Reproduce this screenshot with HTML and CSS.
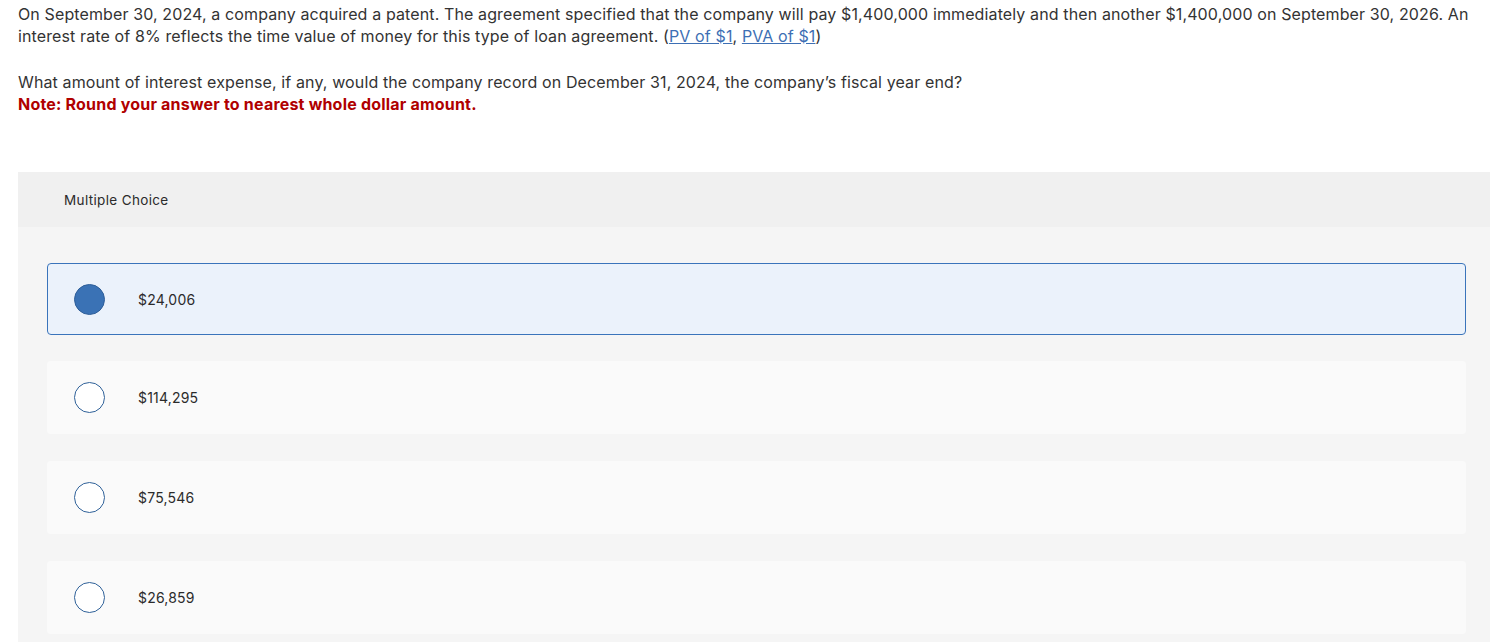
FILE: index.html
```html
<!DOCTYPE html>
<html>
<head>
<meta charset="utf-8">
<link rel="stylesheet" href="styles.css">
</head>
<body>
<div class="page">
  <div class="question">
    <p class="para">On September 30, 2024, a company acquired a patent. The agreement specified that the company will pay $1,400,000 immediately and then another $1,400,000 on September 30, 2026. An interest rate of 8% reflects the time value of money for this type of loan agreement. (<a href="#" class="link">PV of $1</a>, <a href="#" class="link">PVA of $1</a>)</p>
    <p class="para">What amount of interest expense, if any, would the company record on December 31, 2024, the company’s fiscal year end?<br><strong class="note">Note: Round your answer to nearest whole dollar amount.</strong></p>
  </div>
  <div class="panel">
    <div class="panel-head">Multiple Choice</div>
    <div class="panel-body">
      <div class="option selected"><span class="radio filled"></span><span class="label">$24,006</span></div>
      <div class="option"><span class="radio"></span><span class="label">$114,295</span></div>
      <div class="option"><span class="radio"></span><span class="label">$75,546</span></div>
      <div class="option"><span class="radio"></span><span class="label">$26,859</span></div>
    </div>
  </div>
</div>
</body>
</html>
```
FILE: styles.css
```css
html, body {
  margin: 0;
  padding: 0;
  background: #ffffff;
}
body {
  font-family: Inter, "Open Sans", "Liberation Sans", sans-serif;
  color: #333333;
  overflow: hidden;
}
.page {
  padding: 3px 0 0 18px;
}
.question {
  padding-right: 6px;
}
.para {
  margin: 0 0 24px 0;
  font-size: 16px;
  line-height: 22px;
  letter-spacing: 0.12px;
}
.para:last-child {
  margin-bottom: 0;
}
.link {
  color: #3d6fb4;
  text-decoration: underline;
}
.note {
  color: #b00000;
  font-weight: 700;
  letter-spacing: 0.2px;
}
.panel {
  margin-top: 57px;
  background: #f5f5f5;
}
.panel-head {
  background: #f0f0f0;
  height: 55px;
  display: flex;
  align-items: center;
  padding-left: 46px;
  font-size: 13.5px;
  letter-spacing: 0.35px;
  color: #2b2b2b;
}
.panel-body {
  padding: 36px 24px 0 29px;
  display: flex;
  flex-direction: column;
}
.option {
  box-sizing: border-box;
  height: 73px;
  margin-bottom: 27px;
  background: #fafafa;
  border: 1px solid transparent;
  border-radius: 4px;
  display: flex;
  align-items: center;
  padding-left: 26px;
}
.option.selected {
  height: 72px;
  margin-bottom: 26px;
  background: #ebf2fb;
  border-color: #3a74bb;
}
.radio {
  box-sizing: border-box;
  width: 31px;
  height: 31px;
  border-radius: 50%;
  border: 1.5px solid #2f6199;
  background: #ffffff;
  flex: none;
}
.radio.filled {
  background: #3a72b5;
  border-color: #2f5f99;
}
.label {
  margin-left: 33px;
  font-size: 14px;
  letter-spacing: 0.2px;
  color: #2b2b2b;
}
```
